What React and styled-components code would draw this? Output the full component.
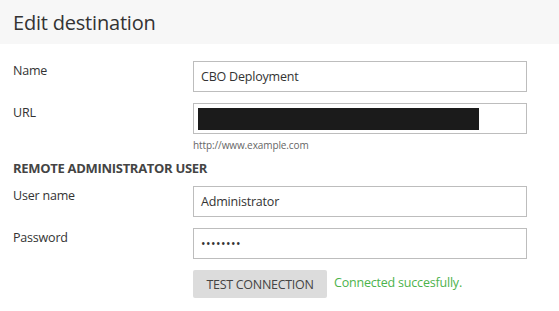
import styled, { createGlobalStyle } from 'styled-components';

const GlobalStyle = createGlobalStyle`
  html, body {
    margin: 0;
    padding: 0;
    background: #fff;
  }
  body {
    font-family: "Open Sans", "Noto Sans", sans-serif;
    color: #333;
  }
`;

const Panel = styled.div`
  width: 559px;
  height: 311px;
  overflow: hidden;
  background: #fff;
`;

const Header = styled.div`
  height: 44px;
  display: flex;
  align-items: center;
  padding: 0 13px;
  background: #f7f7f7;
  box-sizing: border-box;
`;

const Title = styled.h2`
  margin: 0;
  font-size: 20px;
  font-weight: 400;
  color: #333;
  letter-spacing: -0.2px;
`;

const Body = styled.div`
  padding: 17px 13px 0;
  display: flex;
  flex-direction: column;
`;

const Row = styled.div`
  display: grid;
  grid-template-columns: 180px 334px;
  margin-bottom: ${(p) => p.$gap ?? 11}px;
`;

const Label = styled.label`
  font-size: 12.5px;
  color: #333;
  padding-top: 1px;
  letter-spacing: -0.2px;
`;

const Field = styled.div`
  display: flex;
  flex-direction: column;
`;

const Input = styled.div`
  height: 31px;
  box-sizing: border-box;
  border: 1px solid #bdbdbd;
  display: flex;
  align-items: center;
  padding: 0 7px;
  font-size: 12.5px;
  color: #333;
  letter-spacing: -0.2px;
`;

const Redacted = styled.div`
  width: 281px;
  height: 22px;
  margin-left: -3px;
  background: #1b1b1b;
`;

const Dots = styled.span`
  font-size: 12px;
  letter-spacing: 0.5px;
  color: #333;
`;

const Hint = styled.div`
  font-size: 10px;
  color: #666;
  margin-top: 4px;
  letter-spacing: -0.1px;
`;

const Section = styled.h3`
  margin: 7px 0 9px;
  font-size: 13px;
  font-weight: 700;
  color: #444;
  letter-spacing: -0.3px;
`;

const Actions = styled.div`
  display: flex;
  align-items: center;
  gap: 7px;
`;

const Button = styled.button`
  height: 28px;
  width: 134px;
  border: none;
  border-radius: 2px;
  background: #dcdcdc;
  color: #444;
  font-family: inherit;
  font-size: 12.5px;
  letter-spacing: -0.3px;
  padding: 0;
`;

const Status = styled.span`
  font-size: 12.5px;
  color: #4cb34c;
  letter-spacing: -0.2px;
  margin-top: -4px;
`;

export default function App() {
  return (
    <Panel>
      <GlobalStyle />
      <Header>
        <Title>Edit destination</Title>
      </Header>
      <Body>
        <Row>
          <Label>Name</Label>
          <Input>CBO Deployment</Input>
        </Row>
        <Row $gap={0}>
          <Label>URL</Label>
          <Field>
            <Input>
              <Redacted />
            </Input>
            <Hint>http://www.example.com</Hint>
          </Field>
        </Row>
        <Section>REMOTE ADMINISTRATOR USER</Section>
        <Row>
          <Label>User name</Label>
          <Input>Administrator</Input>
        </Row>
        <Row>
          <Label>Password</Label>
          <Input>
            <Dots>••••••••</Dots>
          </Input>
        </Row>
        <Row>
          <span />
          <Actions>
            <Button>TEST CONNECTION</Button>
            <Status>Connected succesfully.</Status>
          </Actions>
        </Row>
      </Body>
    </Panel>
  );
}
